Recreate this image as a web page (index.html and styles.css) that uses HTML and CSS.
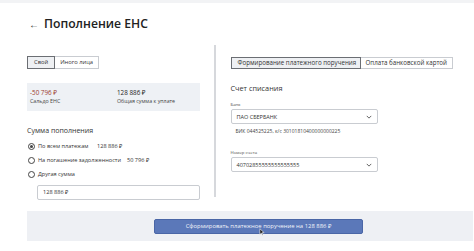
FILE: index.html
```html
<!DOCTYPE html>
<html lang="ru">
<head>
<meta charset="utf-8">
<link rel="stylesheet" href="styles.css">
</head>
<body>
<div class="page">
  <header class="head">
    <span class="back">←</span>
    <h1 class="title">Пополнение ЕНС</h1>
  </header>
  <div class="main">
    <section class="left">
      <div class="seg">
        <span class="seg-btn on">Свой</span>
        <span class="seg-btn">Иного лица</span>
      </div>
      <div class="summary">
        <div class="stat stat-a">
          <div class="val neg">-50 796 ₽</div>
          <div class="cap">Сальдо ЕНС</div>
        </div>
        <div class="stat">
          <div class="val">128 886 ₽</div>
          <div class="cap">Общая сумма к уплате</div>
        </div>
      </div>
      <h2 class="sub">Сумма пополнения</h2>
      <ul class="radios">
        <li class="radio"><span class="dot on"></span><span class="rl rl-1">По всем платежам</span><span class="amt">128 886 ₽</span></li>
        <li class="radio"><span class="dot"></span><span class="rl rl-2">На погашение задолженности</span><span class="amt">50 796 ₽</span></li>
        <li class="radio"><span class="dot"></span><span class="rl">Другая сумма</span></li>
      </ul>
      <div class="input">128 886 ₽</div>
    </section>
    <div class="divider"></div>
    <section class="right">
      <div class="seg seg-r">
        <span class="seg-btn on wide">Формирование платежного поручения</span>
        <span class="seg-btn wide2">Оплата банковской картой</span>
      </div>
      <h2 class="sub sub-r">Счет списания</h2>
      <div class="lbl">Банк</div>
      <div class="select"><span>ПАО СБЕРБАНК</span><svg class="chev" viewBox="0 0 8 5" width="6" height="4"><polyline points="1,1 4,4 7,1" fill="none" stroke="#555" stroke-width="1.2"/></svg></div>
      <div class="hint">БИК 044525225, к/с 30101810400000000225</div>
      <div class="lbl lbl-2">Номер счета</div>
      <div class="select"><span>40702855555555555555</span><svg class="chev" viewBox="0 0 8 5" width="6" height="4"><polyline points="1,1 4,4 7,1" fill="none" stroke="#555" stroke-width="1.2"/></svg></div>
    </section>
  </div>
  <div class="footer">
    <span class="submit">Сформировать платежное поручение на 128 886 ₽</span>
    <svg class="cursor" viewBox="0 0 8 11" width="6" height="8"><path d="M1 1 L1 9 L3 7 L4.5 10 L5.5 9.5 L4 6.5 L7 6.5 Z" fill="#222" stroke="#fff" stroke-width="0.8"/></svg>
  </div>
</div>
</body>
</html>
```

FILE: styles.css
```css
* { box-sizing: border-box; margin: 0; padding: 0; }
html, body { background: #fff; }
body {
  font-family: "Open Sans", "Noto Sans", sans-serif;
  color: #2b2b2b;
  width: 474px;
  height: 251px;
  overflow: hidden;
}
.page {
  border-top: 3px solid #f2f3f5;
  position: relative;
  height: 251px;
}
.head {
  display: flex;
  align-items: center;
  padding: 10px 0 0 29px;
  height: 31px;
}
.back {
  font-size: 10px;
  line-height: 12px;
  margin-right: 5px;
  color: #333;
}
.title {
  font-size: 12.2px;
  font-weight: 600;
  line-height: 18px;
  color: #222;
}
.main {
  display: flex;
  padding-left: 27px;
  margin-top: 11px;
  height: 152px;
}
.left {
  width: 173px;
  padding-top: 11px;
}
.seg {
  display: flex;
}
.seg-btn {
  font-size: 5.8px;
  line-height: 11px;
  height: 13px;
  padding: 0 5px;
  border: 1px solid #c9ccd1;
  background: #fff;
  color: #333;
  white-space: nowrap;
}
.seg-btn.on {
  border-color: #6b6e73;
  background: #eef0f3;
  padding: 0 6px;
}
.seg-btn + .seg-btn { border-left: none; }
.summary {
  display: flex;
  margin-top: 14px;
  height: 28px;
  background: #eef1f5;
  padding: 5px 0 0 3px;
}
.stat-a { width: 87px; }
.val {
  font-size: 6.3px;
  line-height: 9px;
  color: #222;
}
.val.neg { color: #9c3a2e; }
.cap {
  font-size: 5.3px;
  line-height: 8px;
  color: #444;
}
.sub {
  font-size: 7px;
  font-weight: 500;
  line-height: 10px;
  margin-top: 15px;
  color: #333;
}
.radios {
  list-style: none;
  margin-top: 3px;
}
.radio {
  display: flex;
  align-items: center;
  height: 14px;
  font-size: 5.6px;
  color: #333;
}
.dot {
  width: 7px;
  height: 7px;
  border: 1px solid #444;
  border-radius: 50%;
  margin: 0 3px 0 1px;
  flex: none;
  display: flex;
  align-items: center;
  justify-content: center;
}
.dot.on::after {
  content: "";
  width: 3px;
  height: 3px;
  border-radius: 50%;
  background: #444;
}
.rl-1 { width: 59px; }
.rl-2 { width: 89px; }
.amt { color: #333; }
.input {
  margin: 4px 0 0 10px;
  width: 163px;
  height: 15px;
  border: 1px solid #c9ccd1;
  border-radius: 2px;
  font-size: 5.6px;
  line-height: 13px;
  padding-left: 5px;
  color: #333;
}
.divider {
  width: 1.5px;
  background: #d6d8dc;
  margin-left: 14px;
}
.right {
  margin-left: 15px;
  padding-top: 12px;
}
.seg-r .seg-btn {
  height: 12px;
  line-height: 10px;
  font-size: 6.2px;
}
.wide { width: 130px; text-align: center; }
.wide2 { width: 92px; text-align: center; }
.sub-r {
  margin-top: 14px;
  font-size: 7.3px;
}
.lbl {
  font-size: 4.3px;
  line-height: 6px;
  margin-top: 8px;
  color: #444;
}
.lbl-2 { margin-top: 14px; }
.select {
  display: flex;
  align-items: center;
  justify-content: space-between;
  width: 147px;
  height: 15px;
  margin-top: 2px;
  border: 1px solid #c9ccd1;
  border-radius: 2px;
  padding: 0 5px 0 5px;
  font-size: 5.5px;
  color: #333;
}
.hint {
  font-size: 5px;
  line-height: 8px;
  margin: 3px 0 0 5px;
  color: #444;
}
.footer {
  position: relative;
  display: flex;
  align-items: center;
  margin: 14px 1px 0 27px;
  height: 30px;
  background: #eef0f4;
  padding-left: 127px;
}
.submit {
  display: block;
  width: 209px;
  height: 15px;
  background: #5b78b9;
  border: 1px solid #4a66a6;
  border-radius: 2px;
  color: #f2f4fa;
  font-size: 5.9px;
  line-height: 13px;
  text-align: center;
}
.cursor {
  position: absolute;
  left: 232px;
  top: 17px;
}
```
